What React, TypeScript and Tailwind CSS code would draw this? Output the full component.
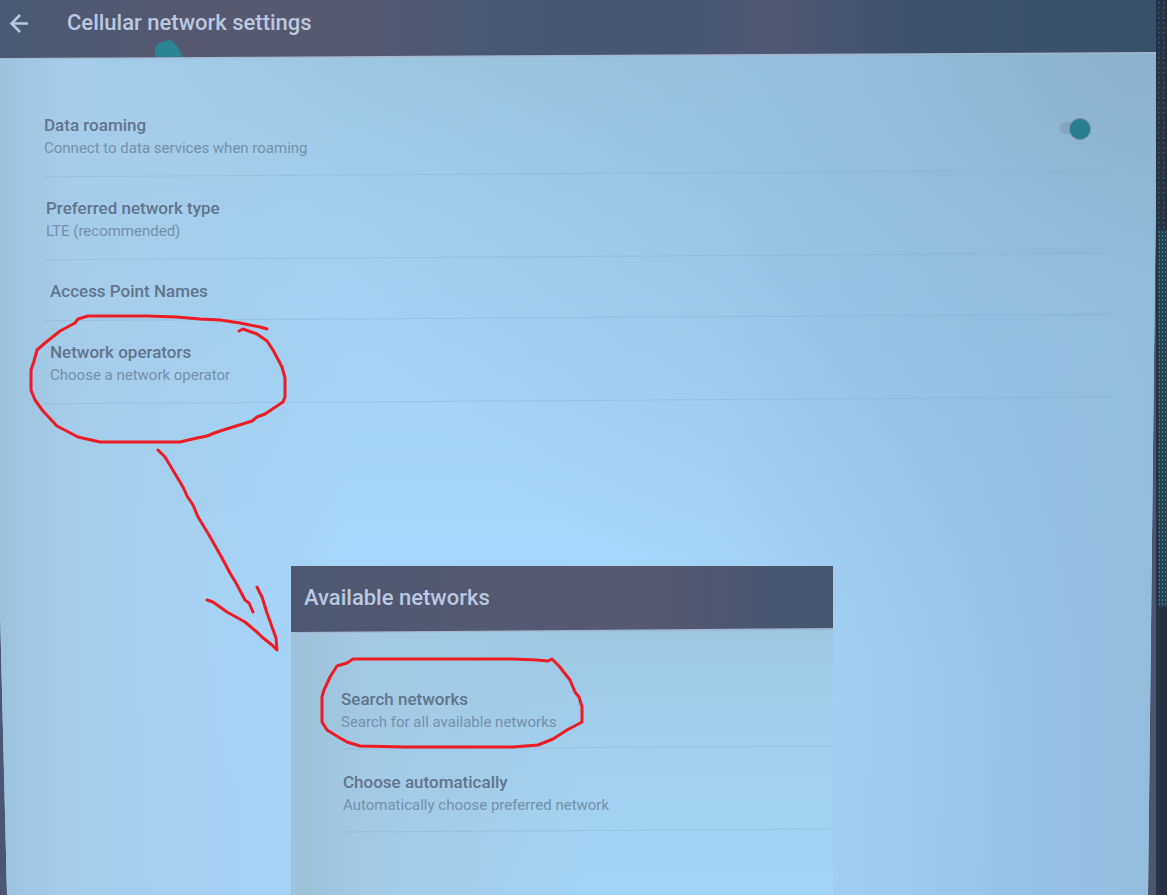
import React from 'react'

type RowProps = {
    title: string
    summary?: string
    indent: string
}

const RowText = ({ title, summary }: { title: string, summary?: string }) => (
    <>
        <span className="block text-[17px] font-medium leading-6 text-[#62758d]">{title}</span>
        {summary && <span className="block text-[15px] leading-[22px] text-[#7391ab]">{summary}</span>}
    </>
)

const Divider = () => (
    <div className="h-px bg-[#7fa9c6]/35 -rotate-[0.35deg]" />
)

const SettingRow = ({ title, summary, indent }: RowProps) => (
    <li>
        <button type="button" className={`block w-full pt-[22px] pb-3.5 text-left ${indent}`}>
            <RowText title={title} summary={summary} />
        </button>
        <Divider />
    </li>
)

const RoamingRow = () => (
    <li>
        <label className="flex items-start justify-between pt-[22px] pb-3.5 pr-[22px]">
            <span>
                <RowText title="Data roaming" summary="Connect to data services when roaming" />
            </span>
            <input
                type="checkbox"
                role="switch"
                defaultChecked
                className="relative mt-[5px] h-[22px] w-8 appearance-none before:absolute before:left-0 before:top-1 before:h-3 before:w-7 before:rounded-full before:bg-[#86a5c0] after:absolute after:right-0 after:top-0 after:size-[22px] after:rounded-full after:border after:border-[#6f8fa8] after:bg-[#287d91]"
            />
        </label>
        <Divider />
    </li>
)

const SettingsScreen = () => (
    <main className="flex-1 bg-[radial-gradient(ellipse_at_100%_5%,#8ab1cd_0%,#90bcdc99_24%,transparent_54%),linear-gradient(90deg,#9cc3de_0%,#a5cdeb_6%,transparent_30%,transparent_62%,#96c2e7_90%,#92bddd_100%),linear-gradient(180deg,#9cc8e3_6%,#a1d0f0_25%,#a6d6fb_62%,#a5d4fa_100%)] [clip-path:polygon(0_0,100%_0,100%_20%,calc(100%-8px)_100%,7px_100%,0_68%)]">
        <div className="bg-[#a5b5ce] [clip-path:polygon(0_0,100%_0,100%_54px,0_100%)]">
            <header className="relative flex h-[59px] items-start bg-[linear-gradient(90deg,#4a5971_0%,#57596f_18%,#57596f_28%,#485872_45%,#465670_58%,#505870_67%,#3e526c_80%,#3a5069_100%)] [clip-path:polygon(0_0,100%_0,100%_52px,0_58px)]">
                <button type="button" aria-label="Back" className="ml-1.5 mt-2.5 text-[#b9c8e0]">
                    <svg viewBox="0 0 26 26" className="size-[26px]" fill="none" stroke="currentColor" strokeWidth="2.6" aria-hidden="true">
                        <path d="M22 13.500H6M14 5l-8.500 8.500L14 22" />
                    </svg>
                </button>
                <h1 className="ml-[35px] mt-2 text-[22px] font-medium leading-[30px] text-[#bac8e0]">Cellular network settings</h1>
                <svg viewBox="0 0 28 18" className="absolute left-[155px] top-[39px] h-[18px] w-7" aria-hidden="true">
                    <path d="M0 18V9L4 4l7-2 3-2 3 2 5 5 3 5 3 6z" fill="#2b8495" />
                </svg>
            </header>
        </div>
        <ul className="ml-11 mr-[43px] mt-8">
            <RoamingRow />
            <SettingRow title="Preferred network type" summary="LTE (recommended)" indent="pl-0.5" />
            <SettingRow title="Access Point Names" indent="pl-1.5" />
            <SettingRow title="Network operators" summary="Choose a network operator" indent="pl-1.5" />
        </ul>
    </main>
)

// dark frame on the right, with the speckled glare on its upper part
const Bezel = () => (
    <div className="flex w-[11px] flex-col bg-[#263143]">
        <div className="h-[230px] bg-[radial-gradient(circle,#2b8091_1px,transparent_1px)] bg-[size:5px_5px] opacity-50" />
        <div className="ml-0.5 h-[377px] bg-[#27404f] bg-[radial-gradient(circle,#2b8495_1px,transparent_1px)] bg-[size:3px_4px]" />
    </div>
)

const AvailableNetworks = () => (
    <section className="absolute bottom-0 left-[291px] top-[566px] w-[542px] overflow-hidden bg-[linear-gradient(90deg,#9dc2da_0%,#a2cae5_14%,transparent_55%),linear-gradient(180deg,#9cc8e2_20%,#a1d0ef_55%,#a3d4f5_100%)]">
        <div className="bg-[#a3b5cc] [clip-path:polygon(0_0,100%_0,100%_64px,0_100%)]">
            <header className="h-[67px] bg-[linear-gradient(90deg,#4d5870_0%,#54596f_35%,#57596f_65%,#48566f_90%,#465670_100%)] pl-[13px] pt-[17px] [clip-path:polygon(0_0,100%_0,100%_62px,0_66px)]">
                <h2 className="text-[22px] font-medium leading-[30px] text-[#bac8e0]">Available networks</h2>
            </header>
        </div>
        <ul className="ml-[50px] mt-8">
            <SettingRow title="Search networks" summary="Search for all available networks" indent="pl-0" />
            <SettingRow title="Choose automatically" summary="Automatically choose preferred network" indent="pl-0.5" />
        </ul>
    </section>
)

// hand drawn pen marks on top of everything
const PenMarks = () => (
    <svg
        className="pointer-events-none absolute left-0 top-0 h-[895px] w-[1167px]"
        viewBox="0 0 1167 895"
        fill="none"
        stroke="#ed1c24"
        strokeWidth="3"
        strokeLinecap="round"
        strokeLinejoin="round"
        aria-hidden="true"
    >
        <path d="M267 329L260 327 240 323 220 320 200 319 177 317 147 316H88L78 319 75 323 60 331 45 343 37 350 34 361 31 370V390L35 400 43 411 57 426 78 437 100 442H180L197 438 207 436 217 432 252 421 257 417 265 414 283 402 285 397V378L282 367 273 350 267 341 257 334 243 329 239 331" />
        <path d="M158 450L165 457 180 482 184 489 187 496 193 505 198 517 209 535 222 558 230 573 236 583 245 600 249 603 253 612" />
        <path d="M257 587L262 597 267 613 276 638 277 650 272 645 262 637 258 633 245 622 227 612 213 602 207 600" />
        <path d="M353 659H513L537 660 548 661 552 659 559 666 570 680 575 692 579 697 582 707V722L567 730 553 739 538 745 513 747H407L360 746 347 742 340 738 327 730 322 722V697L324 690 330 677 337 666 347 663z" />
    </svg>
)

const App = () => {
    return (
        <div className="relative flex min-h-screen overflow-hidden bg-[#4c566f] font-['Roboto',sans-serif]">
            <SettingsScreen />
            <Bezel />
            <AvailableNetworks />
            <PenMarks />
        </div>
    )
}

export default App
